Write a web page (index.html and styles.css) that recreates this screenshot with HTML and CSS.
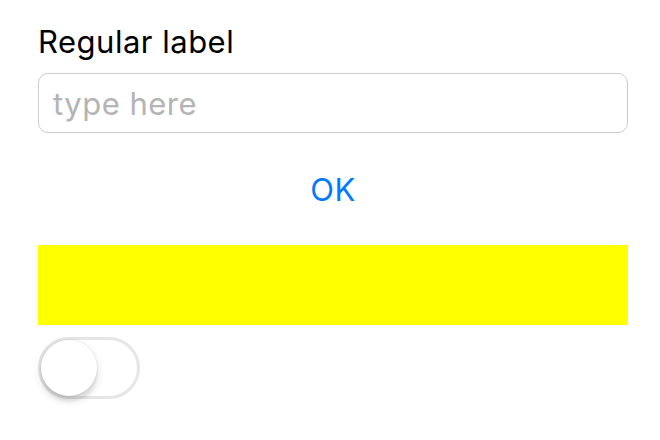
FILE: index.html
```html
<!DOCTYPE html>
<html>
<head>
<meta charset="utf-8">
<link rel="stylesheet" href="styles.css">
</head>
<body>
<div class="screen">
  <div class="label">Regular label</div>
  <div class="field"><span class="placeholder">type here</span></div>
  <div class="button-row"><span class="button">OK</span></div>
  <div class="yellow"></div>
  <div class="switch"><div class="knob"></div></div>
</div>
</body>
</html>
```
FILE: styles.css
```css
html, body {
  margin: 0;
  padding: 0;
  background: #ffffff;
}
.screen {
  width: 660px;
  height: 440px;
  box-sizing: border-box;
  padding: 22px 32px 0 38px;
  display: flex;
  flex-direction: column;
  font-family: Inter, "Liberation Sans", sans-serif;
  font-size: 31px;
  letter-spacing: 0.5px;
  color: #000000;
}
.label {
  height: 40px;
  line-height: 40px;
  margin-bottom: 11px;
}
.field {
  height: 60px;
  box-sizing: border-box;
  border: 1px solid #cccccc;
  border-radius: 10px;
  display: flex;
  align-items: center;
  padding-left: 14px;
}
.placeholder {
  color: #b4b4b4;
}
.button-row {
  height: 112px;
  display: flex;
  align-items: center;
  justify-content: center;
}
.button {
  color: #007aff;
}
.yellow {
  height: 80px;
  background: #ffff00;
}
.switch {
  margin-top: 12px;
  width: 102px;
  height: 62px;
  box-sizing: border-box;
  border: 3px solid #e6e6e6;
  border-radius: 31px;
  background: #ffffff;
  position: relative;
}
.knob {
  position: absolute;
  left: 0;
  top: 0;
  width: 56px;
  height: 56px;
  border-radius: 50%;
  background: #ffffff;
  box-shadow: 0 6px 3px rgba(0,0,0,0.06), 0 4px 10px rgba(0,0,0,0.15), 0 0 0 1px rgba(0,0,0,0.04);
}
```
